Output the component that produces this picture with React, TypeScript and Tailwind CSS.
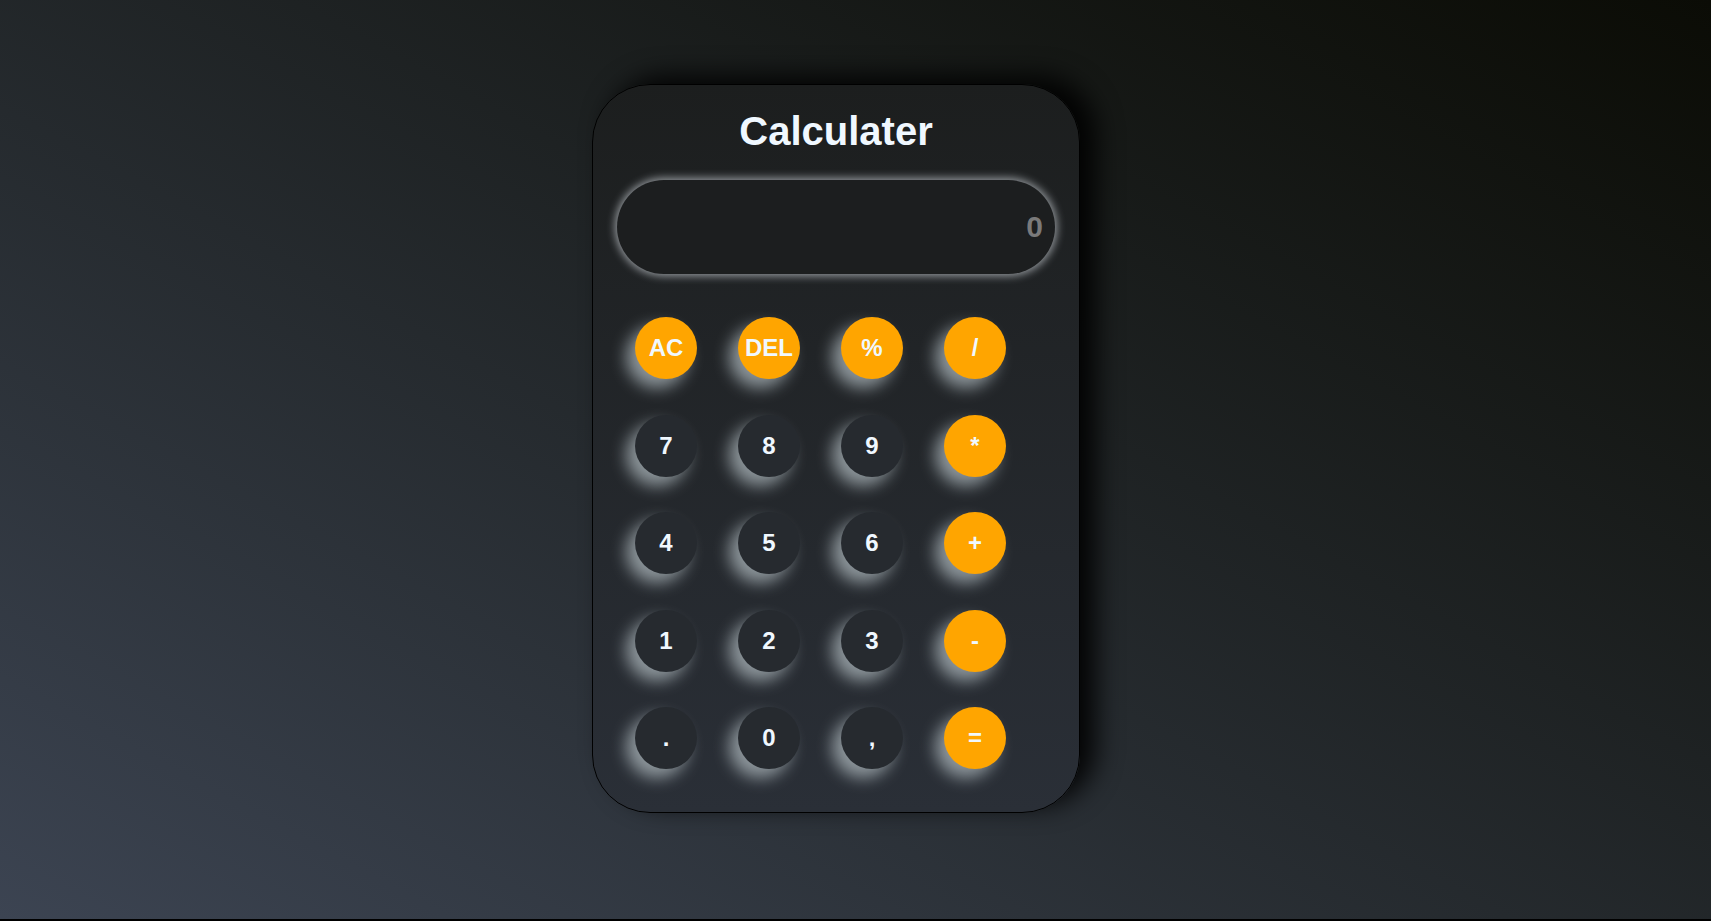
const keys = [
  { label: 'AC', op: true },
  { label: 'DEL', op: true },
  { label: '%', op: true },
  { label: '/', op: true },
  { label: '7' },
  { label: '8' },
  { label: '9' },
  { label: '*', op: true },
  { label: '4' },
  { label: '5' },
  { label: '6' },
  { label: '+', op: true },
  { label: '1' },
  { label: '2' },
  { label: '3' },
  { label: '-', op: true },
  { label: '.' },
  { label: '0' },
  { label: ',' },
  { label: '=', op: true },
];

export default function App() {
  return (
    <div className="min-h-[921px] bg-black" style={{ fontFamily: '"Liberation Sans", Arial, sans-serif' }}>
      <div className="h-[919px] bg-linear-to-tr from-[#3c4452] to-[#0b0c06] flex justify-center pr-[39px] pt-[84px]">
        <div className="w-[488px] h-[729px] rounded-[58px] border border-black bg-linear-to-b from-[#1c1e1e] to-[#2a2f37] shadow-[16px_-8px_26px_rgba(0,0,0,0.9)] flex flex-col items-center px-[24px]">
          <h1 className="mt-[23px] text-[40px] leading-[46px] font-bold text-[#f0f8ff]">Calculater</h1>
          <div className="mt-[26px] w-[438px] h-[94px] rounded-full bg-[#1c1e1f] shadow-[0_0_9px_2px_rgba(190,195,200,0.75)] flex items-center justify-end pr-[12px]">
            <span className="text-[30px] font-bold text-[#7a7a7a] -mt-[2px]">0</span>
          </div>
          <div className="mt-[43px] self-start pl-[18px] grid grid-cols-[repeat(4,62px)] gap-x-[41px] gap-y-[35.5px]">
            {keys.map((k) => (
              <button
                key={k.label}
                className={
                  'w-[62px] h-[62px] rounded-full flex items-center justify-center text-[24px] font-bold text-[#f0f8ff] shadow-[-9px_9px_16px_rgba(165,175,180,0.8)] ' +
                  (k.op ? 'bg-[#ffa500]' : 'bg-[#262a2f]')
                }
              >
                {k.label}
              </button>
            ))}
          </div>
        </div>
      </div>
    </div>
  );
}
